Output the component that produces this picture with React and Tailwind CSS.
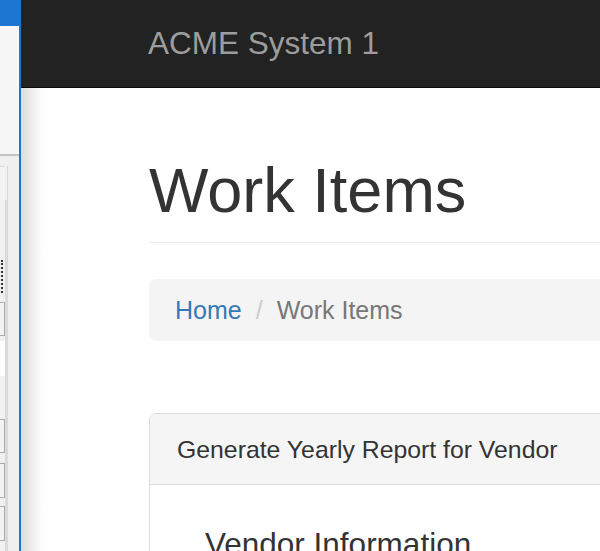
const font = { fontFamily: '"Liberation Sans", Arial, sans-serif' };

const SideWindow = () => (
    <div className="w-[19px] shrink-0 flex flex-col bg-[#f0f0f0]">
        <div className="h-[26px] bg-[#1c76d2]" />
        <div className="h-[128px] bg-[#f7f7f7]" />
        <div className="h-[2px] bg-[#c4c4c4]" />
        <div className="flex flex-1">
            <div className="w-[5px] flex flex-col">
                <div className="h-[10px]" />
                <div className="h-[34px] border-t border-[#dcdcdc] bg-[#f3f3f3]" />
                <div className="h-[60px]" />
                <div className="h-[33px] w-[3px] border-r-2 border-dotted border-[#333]" />
                <div className="h-[9px]" />
                <div className="h-[34px] border border-l-0 border-[#aaa] bg-[#f2f2f2]" />
                <div className="h-[5px]" />
                <div className="h-[35px] bg-white" />
                <div className="h-[43px]" />
                <div className="h-[34px] border border-l-0 border-[#aaa] bg-[#f2f2f2]" />
                <div className="h-[10px]" />
                <div className="h-[35px] border border-l-0 border-[#aaa] bg-[#f2f2f2]" />
                <div className="h-[8px]" />
                <div className="h-[35px] border border-l-0 border-[#aaa] bg-[#f2f2f2]" />
            </div>
            <div className="w-[3px] flex flex-col">
                <div className="h-[10px]" />
                <div className="h-[34px] border-r border-[#dcdcdc]" />
                <div className="flex-1 bg-[#dadada]" />
            </div>
            <div className="flex-1" />
        </div>
    </div>
);

export default function App() {
    return (
        <div className="w-[600px] h-[551px] flex overflow-hidden bg-white" style={font}>
            <SideWindow />
            <div className="w-[2px] shrink-0 bg-[#1c76d2]" />

            <div className="flex-1 min-w-0 flex flex-col overflow-hidden">
                <nav className="h-[88px] shrink-0 bg-[#222] border-b border-[#080808] flex items-center pl-[127px]">
                    <span className="text-[31.5px] leading-[35px] text-[#9d9d9d]">ACME System 1</span>
                </nav>

                <div className="flex-1 bg-[linear-gradient(to_right,#dcdcdc,#fff_22px)]">
                    <div className="w-[900px] pl-[128px]">
                        {/* Page header */}
                        <div className="pt-[68px] pb-[17px] border-b border-[#eee]">
                            <h1 className="text-[63px] leading-[69px] text-[#333]">Work Items</h1>
                        </div>

                        {/* Breadcrumb */}
                        <div className="mt-[36px] h-[62px] bg-[#f4f4f4] rounded-[7px] px-[26px] flex items-center text-[25px] leading-[35px]">
                            <span className="text-[#337ab7]">Home</span>
                            <span className="text-[#ccc] px-[14px]">/</span>
                            <span className="text-[#777]">Work Items</span>
                        </div>

                        {/* Panel */}
                        <div className="mt-[72px] border border-[#ddd] rounded-t-[7px] overflow-hidden">
                            <div className="bg-[#f5f5f5] border-b border-[#ddd] px-[27px] py-[17.5px] text-[24.8px] leading-[35px] text-[#333]">
                                Generate Yearly Report for Vendor
                            </div>
                            <div className="pt-[42px] pl-[55px] h-[120px]">
                                <h4 className="text-[31.5px] leading-[35px] text-[#333]">Vendor Information</h4>
                            </div>
                        </div>
                    </div>
                </div>
            </div>
        </div>
    );
}
